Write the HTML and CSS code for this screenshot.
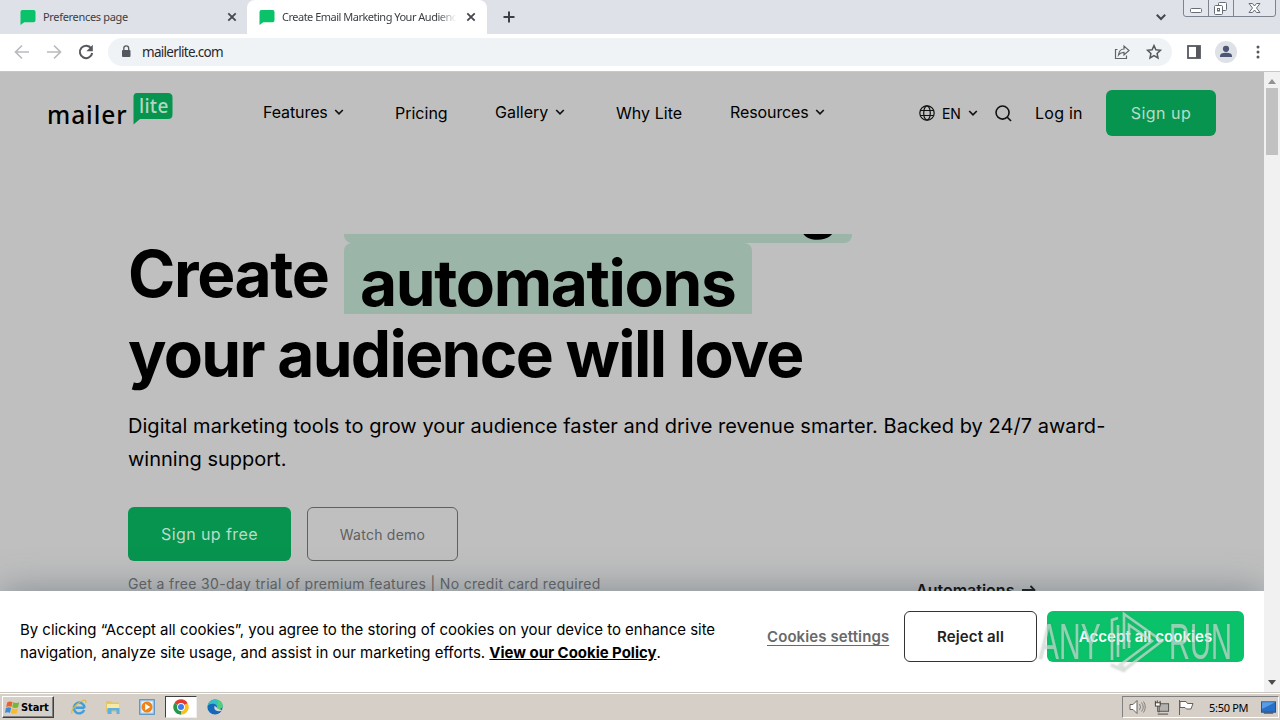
FILE: index.html
```html
<!DOCTYPE html>
<html lang="en">
<head>
<meta charset="utf-8">
<title>MailerLite</title>
<link rel="stylesheet" href="styles.css">
</head>
<body>
<div class="screen">
  <div class="tabs">
    <div class="tab tab-idle">
      <svg class="favicon" viewBox="0 0 16 16"><path d="M2 0h12q2 0 2 2v9q0 2-2 2H4l-4 3V2q0-2 2-2z" fill="#09c269"/></svg>
      <span class="tab-title">Preferences page</span>
      <svg class="close" viewBox="0 0 10 10"><path d="M1.300 1.300l7.400 7.400M8.700 1.300L1.300 8.700"/></svg>
    </div>
    <div class="tab tab-active">
      <svg class="favicon" viewBox="0 0 16 16"><path d="M2 0h12q2 0 2 2v9q0 2-2 2H4l-4 3V2q0-2 2-2z" fill="#09c269"/></svg>
      <span class="tab-title title-fade">Create Email Marketing Your Audience</span>
      <svg class="close" viewBox="0 0 10 10"><path d="M1.300 1.300l7.400 7.400M8.700 1.300L1.300 8.700"/></svg>
    </div>
    <svg class="new-tab" viewBox="0 0 12 12"><path d="M6 .5v11M.5 6h11"/></svg>
    <svg class="tab-search" viewBox="0 0 10 6"><path d="M.8.8L5 5 9.200.8"/></svg>
    <svg class="window-buttons" viewBox="0 0 93 17">
      <path d="M.5 0v14q0 2.500 2.500 2.500h87q2.500 0 2.500-2.500V0" fill="#e3e6ec" stroke="#7e848e"/>
      <path d="M25.500 0v16M50.500 0v16" stroke="#7e848e"/>
      <rect x="7.500" y="8.500" width="11" height="4" rx="1" fill="#fff" stroke="#666c78"/>
      <rect x="35.500" y="2.500" width="8" height="8" rx="1" fill="#fff" stroke="#666c78"/>
      <rect x="31.500" y="5.500" width="8" height="9" rx="1" fill="#fff" stroke="#666c78"/>
      <rect x="34.500" y="8.500" width="2" height="2.500" fill="none" stroke="#666c78"/>
      <path d="M66 3.500h3.500l2 2.500 2-2.500H77L73.500 8l3.500 4.500h-3.500l-2-2.500-2 2.500H66L69.500 8z" fill="#fff" stroke="#666c78"/>
    </svg>
  </div>

  <div class="toolbar">
    <svg class="nav-arrow" viewBox="0 0 16 16"><path d="M15 8H2M8 1.500L1.500 8 8 14.500" stroke="#b9bbbe" stroke-width="1.700" fill="none"/></svg>
    <svg class="nav-arrow" viewBox="0 0 16 16"><path d="M1 8h13M8 1.500L14.500 8 8 14.500" stroke="#b9bbbe" stroke-width="1.700" fill="none"/></svg>
    <svg class="reload" viewBox="0 0 16 16"><path d="M13.200 4.400A6.200 6.200 0 1 0 14.200 9" stroke="#55585c" stroke-width="2" fill="none"/><path d="M14.800.8v6.400H8.400z" fill="#55585c"/></svg>
    <div class="omnibox">
      <svg class="lock" viewBox="0 0 10 13"><rect x="1" y="5" width="8.500" height="7" rx="1" fill="#55585c"/><path d="M2.800 5V3.400a2.400 2.400 0 0 1 4.900 0V5" stroke="#55585c" stroke-width="1.300" fill="none"/></svg>
      <span class="url">mailerlite.com</span>
      <svg class="share" viewBox="0 0 16 16"><path d="M3.500 5.500h-2v9h11v-3M4.500 11c.5-4 2.500-6 5.500-6V2l5 4.500L10 11V8.300c-2.500 0-4 .7-5.500 2.700z"/></svg>
      <svg class="star" viewBox="0 0 16 16"><path d="M8 1.600l1.900 4.200 4.500.5-3.300 3.100.9 4.600L8 11.700 4 14l.9-4.600L1.600 6.300l4.500-.5z"/></svg>
    </div>
    <svg class="panel" viewBox="0 0 14 14"><rect x="1" y="1" width="12" height="12" fill="none" stroke="#55585c" stroke-width="1.800"/><path d="M9 1h4v12H9z" fill="#55585c"/></svg>
    <svg class="avatar" viewBox="0 0 22 22"><circle cx="11" cy="11" r="11" fill="#dee1e6"/><circle cx="11" cy="7.800" r="3.100" fill="#4d5672"/><path d="M5 16v-1.200q0-3 6-3t6 3V16z" fill="#4d5672"/></svg>
    <svg class="dots" viewBox="0 0 4 14"><circle cx="2" cy="2" r="1.500"/><circle cx="2" cy="7" r="1.500"/><circle cx="2" cy="12" r="1.500"/></svg>
  </div>

  <div class="viewport">
    <div class="page">
      <div class="header">
        <div class="logo">
          <span class="logo-mailer">mailer</span>
          <div class="logo-bubble">
            <svg class="bubble-shape" viewBox="0 0 40 32"><path d="M4 0h31q4.500 0 4.500 4.500v17q0 4.500-4.500 4.500H7l-6.500 5.500V4Q.5 0 4 0z" fill="#07944f"/></svg>
            <span class="logo-lite">lite</span>
          </div>
        </div>
        <div class="menu">
          <div class="item features"><span>Features</span><svg class="chev" viewBox="0 0 10 6"><path d="M1.200 1L5 4.800 8.800 1"/></svg></div>
          <div class="item pricing low"><span>Pricing</span></div>
          <div class="item gallery"><span>Gallery</span><svg class="chev" viewBox="0 0 10 6"><path d="M1.200 1L5 4.800 8.800 1"/></svg></div>
          <div class="item why low"><span>Why Lite</span></div>
          <div class="item resources"><span>Resources</span><svg class="chev" viewBox="0 0 10 6"><path d="M1.200 1L5 4.800 8.800 1"/></svg></div>
        </div>
        <div class="account">
          <svg class="globe" viewBox="0 0 16 16"><circle cx="8" cy="8" r="7.200"/><ellipse cx="8" cy="8" rx="3.300" ry="7.200"/><path d="M1.500 5.500h13M1.500 10.500h13"/></svg>
          <span class="lang">EN</span>
          <svg class="chev" viewBox="0 0 10 6"><path d="M1.200 1L5 4.800 8.800 1"/></svg>
          <svg class="search" viewBox="0 0 18 18"><circle cx="8" cy="8" r="6.900"/><path d="M13 13l4 4"/></svg>
          <span class="login">Log in</span>
          <div class="btn btn-signup"><span>Sign up</span></div>
        </div>
      </div>

      <div class="hero">
        <div class="headline">
          <span class="create">Create</span>
          <div class="rotator">
            <div class="word word-prev"><span>email marketing</span></div>
            <div class="word word-now"><span>automations</span></div>
          </div>
        </div>
        <div class="headline second"><span class="love">your audience will love</span></div>
        <div class="lead"><span class="lead-a">Digital marketing tools to grow your audience faster and drive revenue smarter. Backed by 24/7 award-</span><span class="lead-b">winning support.</span></div>
        <div class="actions">
          <div class="btn btn-free"><span>Sign up free</span></div>
          <div class="btn btn-demo"><span>Watch demo</span></div>
        </div>
        <div class="notes">
          <span class="trial">Get a free 30-day trial of premium features | No credit card required</span>
          <div class="auto"><span>Automations</span><svg class="auto-arrow" viewBox="0 0 14 10"><path d="M0 5h12M8.500 1l4 4-4 4"/></svg></div>
        </div>
      </div>

      <div class="cookies">
        <div class="cookie-text"><span class="ck-a">By clicking “Accept all cookies”, you agree to the storing of cookies on your device to enhance site</span><span class="ck-b">navigation, analyze site usage, and assist in our marketing efforts. <b>View our Cookie Policy</b>.</span></div>
        <span class="settings">Cookies settings</span>
        <div class="btn btn-reject"><span>Reject all</span></div>
        <div class="btn btn-accept"><span>Accept all cookies</span></div>
      </div>
    </div>
    <div class="scrollbar">
      <svg class="sb-up" viewBox="0 0 8 5"><path d="M0 5l4-5 4 5z" fill="#929292"/></svg>
      <div class="thumb"></div>
      <svg class="sb-down" viewBox="0 0 8 5"><path d="M0 0l4 5 4-5z" fill="#4d4d4d"/></svg>
    </div>
    <div class="watermark">
      <span class="wm-any">ANY</span>
      <svg class="wm-play" viewBox="0 0 56 62"><g fill="none" stroke-width="2.600"><path d="M9 7L3 9v40M9 14v32"/><path d="M15 38V3l38 27-37 28-5-4 32-24-23-16v23"/><path d="M2 54l14 6"/></g></svg>
      <span class="wm-run">RUN</span>
    </div>
  </div>

  <div class="taskbar">
    <div class="start">
      <svg class="flag" viewBox="0 0 16 16"><path d="M2.500 2.500Q5 .8 8 2.200L6.800 7.400Q4 6 1.200 7.500z" fill="#e8622a"/><path d="M8.800 2.500Q12 4 15.200 2.400L14 7.800q-3 1.500-6.300 0z" fill="#77b737"/><path d="M1 8.400Q4 7 6.600 8.400L5.300 13.600Q2.500 12.300 0 13.700z" fill="#3d8bd3"/><path d="M7.500 8.800q3.300 1.500 6.300 0L12.500 14q-3 1.500-6.300-.1z" fill="#f5bd2e"/></svg>
      <span>Start</span>
    </div>
    <div class="quick">
      <svg class="app" viewBox="0 0 16 16"><path d="M13.500 8.800H4.500M13.200 11A5.400 5.400 0 1 1 13.600 8.800" fill="none" stroke="#3f9fdc" stroke-width="2.400"/><path d="M1 14.500C-1 11 8 2 13.500 1c2 0 1.500 2 1 3" fill="none" stroke="#e5b92e" stroke-width="1.200"/></svg>
      <svg class="app" viewBox="0 0 16 16"><path d="M1 2h5l1 1.500h7V13H1z" fill="#e3c766"/><path d="M2 5h12v5H2z" fill="#f8e9a8"/><path d="M2.500 9h12v6h-3v-3.500h-5V15h-4z" fill="#5fb0dc"/></svg>
      <svg class="app" viewBox="0 0 16 16"><rect x=".7" y=".7" width="14.600" height="14.600" fill="#a9d1f1" stroke="#4a8ac4"/><rect x="2.500" y="2.500" width="11" height="11" fill="#f3f6fa"/><circle cx="8" cy="8" r="5.500" fill="#ee8416"/><path d="M6.200 4.800L11.300 8l-5.100 3.200z" fill="#fff"/></svg>
      <div class="app-open">
        <svg class="app" viewBox="0 0 16 16"><circle cx="8" cy="8" r="7.700" fill="#fff"/><path d="M8 8L1.330 4.150A7.700 7.700 0 0 1 14.670 4.150z" fill="#e33b2e"/><path d="M8 8l6.670-3.850A7.700 7.700 0 0 1 8 15.700z" fill="#fbc116"/><path d="M8 8v7.700A7.700 7.700 0 0 1 1.330 4.150z" fill="#279847"/><circle cx="8" cy="8" r="3.900" fill="#fff"/><circle cx="8" cy="8" r="3" fill="#3b7ded"/></svg>
      </div>
      <svg class="app" viewBox="0 0 16 16"><circle cx="8" cy="8" r="7.600" fill="#1668b8"/><path d="M.5 7C1.500 2 5 .4 8.500.4c4.500 0 7.300 3.200 7.100 6.300-.2 2.800-3.600 3.800-5.600 2.800C11 7 8.500 4.500 5.500 4.800 3 5 1.300 6 .5 7z" fill="#35bfc6"/><path d="M11 1q5 2 4.600 6c-.5 2.500-3.600 3.500-5.600 2.500z" fill="#53cf77"/><path d="M7.500 7c-1 4 2 6.500 8 4.500C13 9.500 10 10.500 9.500 8z" fill="#d6d6d0"/></svg>
    </div>
    <div class="tray">
      <svg class="tr-sound" viewBox="0 0 17 14"><path d="M1 4.500h3l4-4v13l-4-4H1z" fill="#fff" stroke="#66625e"/><path d="M10.500 4q2 3 0 6M12.500 2.500q3.500 4.500 0 9M14.500 1.500q3.500 5.500 0 11" fill="none" stroke="#85817c"/></svg>
      <svg class="tr-net" viewBox="0 0 17 15"><rect x="5.500" y="3.500" width="10" height="8" fill="#b4b2ae" stroke="#55524e"/><path d="M4 14.500h11M1.500.5v4h5v-4M3.500 0v3M4 5v7h2" fill="none" stroke="#44413e"/><rect x="1.500" y="2.500" width="5" height="3.500" fill="#fff" stroke="#44413e"/></svg>
      <svg class="tr-flag" viewBox="0 0 16 15"><path d="M1.500 0v15" stroke="#66625e"/><path d="M2 1.500h6l1.500 2H15L13 9H8.500L7 7.500H2z" fill="#fff" stroke="#66625e"/></svg>
      <span class="clock">5:50 PM</span>
      <svg class="tr-desk" viewBox="0 0 16 13"><rect x=".5" y=".5" width="15" height="11" fill="#286fc7" stroke="#1e4e8c"/><path d="M1 1h14L1 8z" fill="#5a9be4"/><path d="M3 12.500h10" stroke="#26394f"/></svg>
    </div>
  </div>
</div>
</body>
</html>
```
FILE: styles.css
```css
* { box-sizing: border-box; }
body { margin: 0; font-family: Inter, "Liberation Sans", sans-serif; }
svg { display: block; flex: none; overflow: visible; }
span { white-space: nowrap; }
.screen { width: 1280px; height: 720px; overflow: hidden; display: flex; flex-direction: column; background: #fff; }

/* Browser tabs */
.tabs { height: 34px; flex: none; display: flex; align-items: flex-start; background: #dee1e8; font: 11px "Noto Sans", sans-serif; color: #3b3e43; }
.tab { display: flex; align-items: center; height: 34px; }
.tab-idle { width: 247px; padding: 0 10px 0 20px; }
.tab-active { width: 240px; padding: 0 11px 0 12px; background: #fff; border-radius: 8px 8px 0 0; }
.favicon { width: 16px; height: 15px; margin-right: 7px; }
.tab-title { flex: 1; overflow: hidden; letter-spacing: -.32px; margin-top: -2px; }
.title-fade { letter-spacing: -.5px; -webkit-mask-image: linear-gradient(90deg, #000 88%, transparent 99%); mask-image: linear-gradient(90deg, #000 88%, transparent 99%); }
.close { width: 10px; height: 10px; margin-left: 8px; stroke: #44474c; stroke-width: 1.8; }
.new-tab { width: 12px; height: 12px; margin: 11px 0 0 16px; stroke: #3c4043; stroke-width: 2; }
.tab-search { width: 10px; height: 6px; margin: 14px 17px 0 auto; stroke: #44474c; stroke-width: 2; fill: none; }
.window-buttons { width: 93px; height: 17px; margin-right: 4px; fill: none; }

/* Toolbar */
.toolbar { height: 38px; flex: none; display: flex; align-items: center; padding: 0 20px 2px 14px; border-bottom: 1px solid #c6c8ca; }
.nav-arrow { width: 16px; height: 16px; margin-right: 16px; }
.reload { width: 16px; height: 16px; margin-right: 14px; }
.omnibox { width: 1064px; height: 28px; display: flex; align-items: center; padding: 0 10px 0 13px; border-radius: 14px; background: #f0f3f6; }
.lock { width: 10px; height: 13px; margin-right: 11px; }
.url { font: 13.5px "Noto Sans", sans-serif; color: #27292c; letter-spacing: -.7px; padding-top: 1px; }
.share { width: 16px; height: 16px; margin-left: auto; fill: none; stroke: #606368; stroke-width: 1.2; }
.star { width: 16px; height: 16px; margin-left: 16px; fill: none; stroke: #55585c; stroke-width: 1.5; }
.panel { width: 14px; height: 14px; margin-left: 15px; }
.avatar { width: 22px; height: 22px; margin-left: 14px; }
.dots { width: 4px; height: 14px; margin-left: auto; fill: #55585c; }

/* Web page */
.viewport { height: 620px; flex: none; display: flex; position: relative; }
.page { width: 1264px; height: 620px; overflow: hidden; position: relative; background: #bfbfbf; color: #000; }
.header { height: 82px; display: flex; align-items: center; padding-left: 47px; font-size: 16px; }
.logo { width: 216px; height: 40px; display: flex; }
.logo-mailer { width: 86px; font: 500 24.5px/44px "Noto Sans", sans-serif; letter-spacing: .95px; }
.logo-bubble { position: relative; width: 40px; height: 32px; }
.bubble-shape { width: 40px; height: 32px; }
.logo-lite { position: absolute; left: 6px; top: 0; font: 500 19px/27px "Noto Sans", sans-serif; color: #b5d5c1; letter-spacing: .3px; }
.menu { display: flex; width: 656px; margin-top: -2px; }
.item { display: flex; align-items: center; line-height: 20px; }
.item .chev { margin-left: auto; }
.low { position: relative; top: 1px; }
.chev { width: 10px; height: 6px; fill: none; stroke: #111; stroke-width: 1.7; }
.features { width: 81px; margin-right: 51px; letter-spacing: -.1px; }
.pricing { width: 52px; margin-right: 48px; }
.gallery { width: 70px; margin-right: 51px; }
.why { width: 66px; margin-right: 48px; letter-spacing: .05px; }
.resources { width: 95px; letter-spacing: -.1px; }
.account { display: flex; align-items: center; }
.globe { width: 16px; height: 16px; fill: none; stroke: #111; stroke-width: 1.2; margin-right: 7px; }
.lang { width: 26px; font-size: 14px; letter-spacing: -.2px; }
.search { width: 17px; height: 17px; margin: 0 23px 0 17px; fill: none; stroke: #111; stroke-width: 1.7; }
.login { width: 71px; letter-spacing: .25px; }
.btn { display: flex; align-items: center; justify-content: center; border-radius: 6px; flex: none; }
.btn-signup { width: 110px; height: 46px; background: #07944f; color: #b9dcc9; letter-spacing: .5px; }

.hero { padding: 80px 0 0 128px; }
.headline { height: 80px; display: flex; font-weight: 700; font-size: 64px; line-height: 80px; letter-spacing: -1.35px; }
.second { letter-spacing: -1.69px; }
.create { width: 216px; }
.rotator { width: 520px; height: 80px; overflow: hidden; }
.word { height: 80px; padding: 0 16px; background: #9bb5a9; border-radius: 8px; }
.word-prev { width: 508px; margin-top: -71px; letter-spacing: -1.6px; }
.word-now { width: 408px; }
.lead { display: flex; flex-direction: column; padding-top: 16px; font-size: 20px; line-height: 33px; }
.lead-a { letter-spacing: .045px; }
.actions { display: flex; gap: 16px; margin-top: 31px; }
.btn-free { width: 163px; height: 54px; background: #07944f; color: #b9dcc9; letter-spacing: .4px; }
.btn-demo { width: 151px; height: 54px; border: 1px solid #606060; color: #606060; font-size: 14px; letter-spacing: .25px; }
.notes { display: flex; padding-top: 13px; font-size: 14px; line-height: 20px; color: #606060; }
.trial { width: 788px; letter-spacing: .335px; }
.auto { display: flex; align-items: center; height: 20px; margin-top: 6px; font-size: 16px; font-weight: 600; color: #000; }
.auto-arrow { width: 14px; height: 10px; margin-left: 8px; fill: none; stroke: #111; stroke-width: 1.8; }

/* Consent bar laid over the page */
.cookies { position: absolute; left: 0; right: 0; bottom: 0; height: 101px; display: flex; align-items: flex-start; padding: 20px 20px 0; background: #fff; box-shadow: 0 0 36px rgba(80, 96, 110, .55); font-size: 15px; }
.cookie-text { width: 747px; display: flex; flex-direction: column; padding-top: 7px; line-height: 23px; letter-spacing: -.03px; }
.cookie-text b { font-weight: 700; text-decoration: underline; }
.settings { width: 137px; line-height: 51px; font-weight: 600; color: #696969; letter-spacing: .1px; text-decoration: underline; text-underline-offset: 3px; }
.btn-reject { width: 133px; height: 51px; border: 1px solid #333; color: #222; font-weight: 600; letter-spacing: .15px; }
.btn-accept { width: 197px; height: 51px; margin-left: 10px; background: #09c269; color: #fff; font-weight: 600; letter-spacing: .07px; }

.scrollbar { width: 16px; display: flex; flex-direction: column; align-items: center; background: #f1f1f1; padding: 7px 0; }
.sb-up, .sb-down { width: 8px; height: 5px; }
.thumb { width: 12px; height: 67px; margin-top: 4px; background: #c1c1c1; }
.sb-down { margin-top: auto; }

.watermark { position: absolute; left: 1039px; top: 538px; width: 194px; height: 64px; display: flex; align-items: center; color: rgba(218, 228, 223, .62); font: 50px/64px "Liberation Sans", sans-serif; filter: drop-shadow(0 0 1px rgba(120, 130, 125, .5)); }
.wm-any, .wm-run { display: block; flex: none; width: 62px; transform: scaleX(.6); transform-origin: 0 50%; }
.wm-play { width: 56px; height: 62px; margin-left: 8px; stroke: rgba(218, 228, 223, .65); }
.wm-run { margin-left: 4px; transform: scaleX(.58); }

/* Taskbar */
.taskbar { height: 28px; flex: none; display: flex; align-items: center; padding: 1px 1px 0 2px; border-top: 1px solid #c9c6c0; background: #d6cfc7; box-shadow: inset 0 1px 0 #fff; }
.start { width: 52px; height: 22px; display: flex; align-items: center; padding-left: 2px; border: 1px solid; border-color: #fff #404040 #404040 #fff; box-shadow: inset -1px -1px 0 #808080; font: 700 11px "DejaVu Sans Condensed", sans-serif; }
.flag { width: 15px; height: 15px; margin-right: 1px; }
.start span { letter-spacing: -.1px; }
.quick { display: flex; align-items: center; margin-left: 17px; gap: 18px; }
.app { width: 16px; height: 16px; }
.app-open { width: 32px; height: 22px; margin: 0 -8px; display: flex; align-items: center; justify-content: center; background: #fff; border: 1px solid; border-color: #404040 #eee #eee #404040; }
.tray { width: 157px; height: 22px; margin-left: auto; display: flex; align-items: center; padding-left: 6px; border: 1px solid; border-color: #808080 #fff #fff #808080; font: 11px "Noto Sans", sans-serif; }
.tr-sound { width: 17px; height: 14px; margin-right: 8px; }
.tr-net { width: 16px; height: 15px; margin-right: 8px; }
.tr-flag { width: 16px; height: 15px; margin-right: 15px; }
.clock { width: 52px; letter-spacing: -.3px; }
.tr-desk { width: 15px; height: 13px; }
```
